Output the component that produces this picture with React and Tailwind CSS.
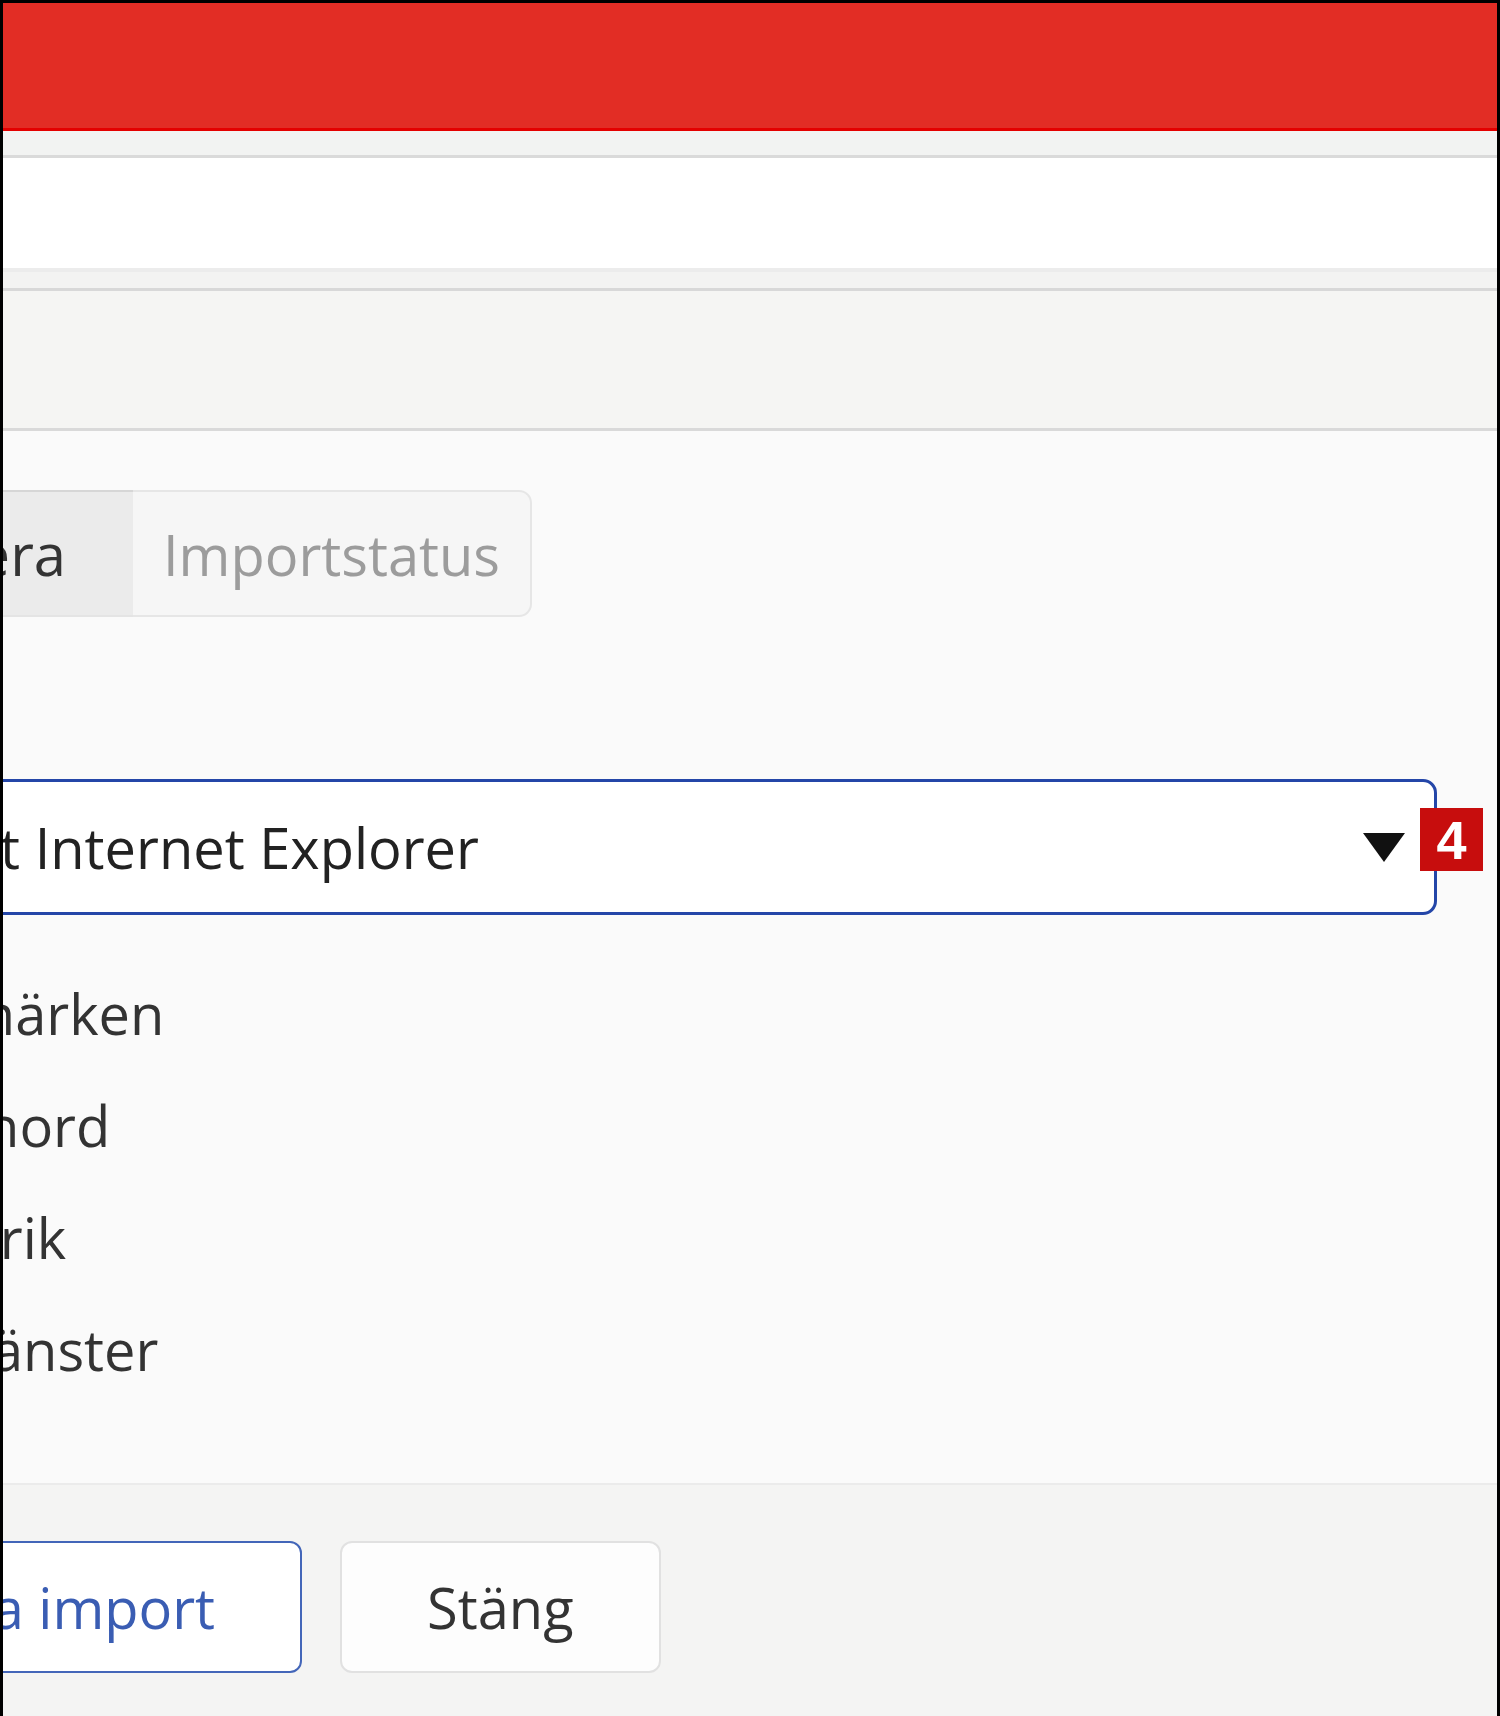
const options = ["Bokmärken", "Lösenord", "Historik", "Söktjänster"];

function Caret() {
  return (
    <svg width="44" height="31" viewBox="0 0 44 31" className="shrink-0">
      <polygon points="1,1 43,1 22,30" fill="#111" />
    </svg>
  );
}

export default function App() {
  return (
    <div className="flex h-[1716px] w-[1500px] flex-col overflow-hidden border-l-[3px] border-r-[3px] border-t-[3px] border-black font-['Open_Sans',sans-serif]">
      {/* title bar */}
      <div className="h-[128px] shrink-0 border-b-[3px] border-[#e40000] bg-[#e22d25]" />
      <div className="h-[27px] shrink-0 border-b-[3px] border-[#dadada] bg-[#f2f3f2]" />
      <div className="h-[110px] shrink-0 bg-white" />
      <div className="h-[23px] shrink-0 border-b-[3px] border-t-[4px] border-b-[#d8d8d8] border-t-[#ececec] bg-[#f3f3f2]" />
      <div className="h-[140px] shrink-0 border-b-[3px] border-[#d9d9d9] bg-[#f5f5f3]" />

      {/* dialog body */}
      <div className="h-[1054px] shrink-0 border-b-2 border-[#ebebeb] bg-[#fafafa]">
        <div className="ml-[-269px] mr-[60px] pt-[59px]">
          <div className="flex">
            <div className="flex h-[127px] w-[399px] items-center justify-center rounded-l-[13px] border-y-2 border-l-2 border-t-[#d6d6d6] border-b-[#e4e4e4] border-l-[#d6d6d6] bg-[#ebebeb] pr-[10px] text-[58px] text-[#333]">
              Importera
            </div>
            <div className="flex h-[127px] w-[399px] items-center justify-center rounded-r-[13px] border-y-2 border-r-2 border-[#e6e6e6] bg-[#f6f6f6] text-[56px] text-[#9c9c9c]">
              Importstatus
            </div>
          </div>

          <div className="relative mt-[162px] flex h-[136px] items-center rounded-[14px] border-[3px] border-[#2446a8] bg-white pl-[36px] pr-[28px]">
            <span className="flex-1 whitespace-nowrap text-[56px] text-[#222]">Microsoft Internet Explorer</span>
            <Caret />
            <div className="absolute right-[-49px] top-[26px] flex h-[63px] w-[63px] items-center justify-center bg-[#c70d0d] font-['Liberation_Sans',sans-serif] text-[54px] font-bold leading-none text-white">
              4
            </div>
          </div>

          <div className="mt-[42px]">
            {options.map((label) => (
              <label key={label} className="flex h-[112px] items-center">
                <span className="ml-[24px] mr-[50px] h-[56px] w-[56px] rounded-[8px] border-2 border-[#2446a8] bg-[#2446a8]" />
                <span className="whitespace-nowrap text-[56px] text-[#333]">{label}</span>
              </label>
            ))}
          </div>
        </div>
      </div>

      {/* footer */}
      <div className="flex-1 bg-[#f4f4f3]">
        <div className="ml-[-222px] flex gap-[38px] pt-[56px]">
          <button className="h-[132px] whitespace-nowrap rounded-[12px] border-2 border-[#4366b9] bg-white px-[85px] text-[56px] text-[#3a5db3]">
            Starta import
          </button>
          <button className="h-[132px] whitespace-nowrap rounded-[12px] border-2 border-[#e1e1e1] bg-[#fdfdfd] px-[85px] text-[56px] text-[#333]">
            Stäng
          </button>
        </div>
      </div>
    </div>
  );
}
